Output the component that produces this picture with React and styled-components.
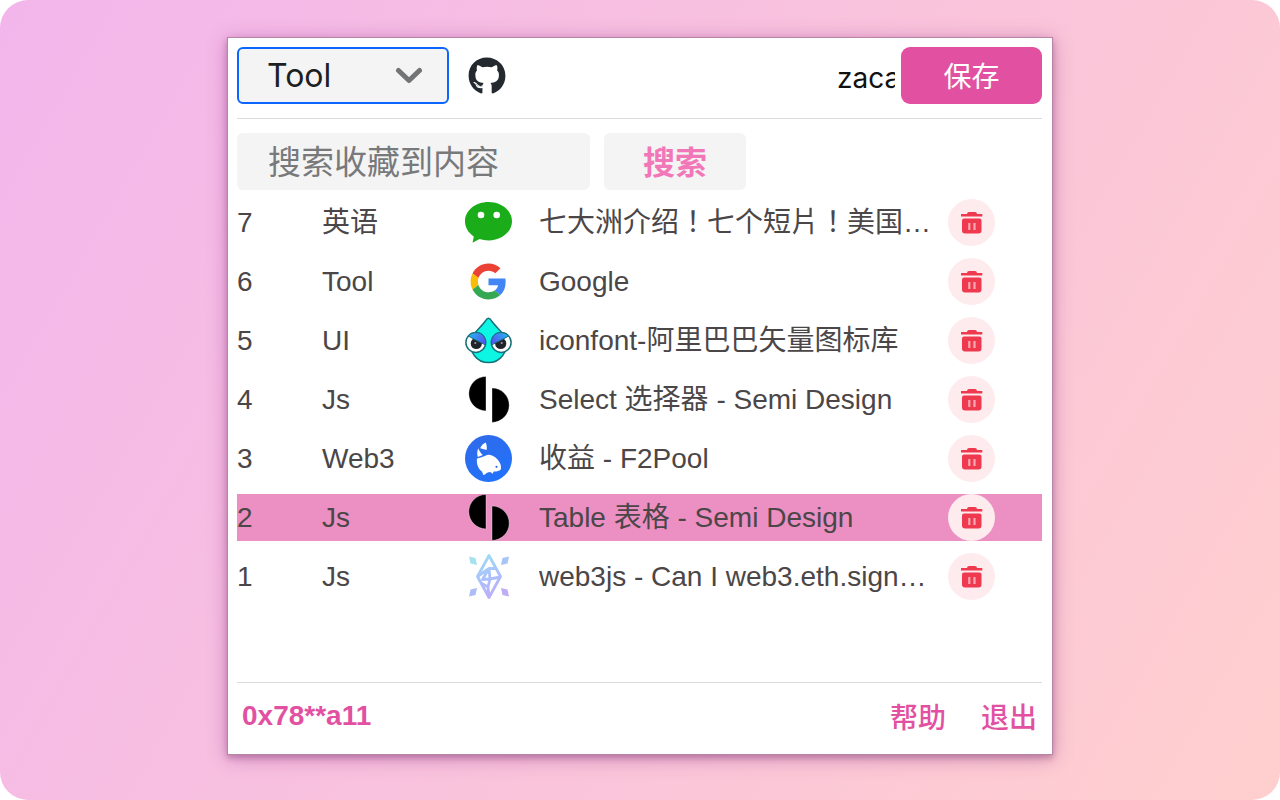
import React, { useState } from 'react';
import styled, { createGlobalStyle } from 'styled-components';
import { FaGithub } from 'react-icons/fa';

const uiFont = "Inter, 'Noto Sans CJK SC', sans-serif";
const bodyFont = "'Liberation Sans', 'Noto Sans CJK SC', sans-serif";
const titleFont = "'Liberation Sans', 'Noto Sans CJK TC', sans-serif";
const pink = '#e251a1';

const GlobalStyle = createGlobalStyle`
  *, *::before, *::after { box-sizing: border-box; }
  body { margin: 0; background: #fff; font-family: ${bodyFont}; }
  button, input, select { font: inherit; border: 0; outline: 0; padding: 0; margin: 0; }
`;

const Page = styled.div`
  display: flex;
  flex-direction: column;
  align-items: center;
  min-height: 100vh;
  padding: 37px 24px 45px;
  border-radius: 28px;
  background: linear-gradient(120deg, #f3b6ec 0%, #ffcfce 100%);
`;

const Panel = styled.main`
  display: flex;
  flex-direction: column;
  flex: 1;
  width: 100%;
  max-width: 826px;
  padding: 9px 10px 0 9px;
  border: 1px solid #b984a6;
  background: #fff;
  color: #4b4647;
  font-size: 28px;
  box-shadow: 0 3px 18px rgba(150, 50, 140, 0.42), 0 3px 6px rgba(80, 30, 70, 0.3);
`;

const Toolbar = styled.header`
  display: flex;
  align-items: center;
  padding-bottom: 14px;
  border-bottom: 1px solid #dcdcde;
`;

const SelectBox = styled.div`
  display: grid;
  align-items: center;
  width: 212px;
  height: 57px;
  margin-right: 19px;
  border: 2px solid #0a66ff;
  border-radius: 6px;
  background: #f4f4f4;
  > * { grid-area: 1 / 1; }
  > svg { justify-self: end; margin-right: 24px; pointer-events: none; }
`;

const Select = styled.select`
  appearance: none;
  width: 100%;
  height: 100%;
  padding-left: 28px;
  background: transparent;
  color: #1c1f23;
  font-family: ${uiFont};
  font-size: 32px;
`;

const RepoLink = styled.a`
  display: flex;
  color: #24292f;
  font-size: 38px;
`;

const NameInput = styled.input`
  width: 58px;
  height: 57px;
  margin: 0 6px 0 auto;
  padding-top: 4px;
  background: transparent;
  color: #111;
  font-family: ${uiFont};
`;

const Button = styled.button`
  width: ${p => (p.$primary ? 141 : 142)}px;
  height: 57px;
  padding-bottom: ${p => (p.$primary ? 2 : 4)}px;
  border-radius: ${p => (p.$primary ? 9 : 6)}px;
  background: ${p => (p.$primary ? pink : '#f4f4f4')};
  color: ${p => (p.$primary ? '#fff' : '#f277b8')};
  font-family: ${uiFont};
  font-size: ${p => (p.$primary ? 28 : 32)}px;
  font-weight: ${p => (p.$primary ? 400 : 700)};
  cursor: pointer;
`;

const SearchBar = styled.form`
  display: flex;
  gap: 14px;
  padding: 14px 0 9px;
`;

const SearchInput = styled.input`
  width: 353px;
  height: 57px;
  padding: 0 31px;
  border-radius: 6px;
  background: #f4f4f4;
  color: #1c1f23;
  font-family: ${uiFont};
  font-size: 33px;
  &::placeholder { color: #78797b; opacity: 1; }
`;

const List = styled.table`
  display: block;
  flex: 1;
  tbody { display: grid; gap: 12px; }
`;

const Row = styled.tr`
  display: grid;
  grid-template-columns: 85px 143px 74px minmax(0, 1fr) 94px;
  align-items: center;
  height: 47px;
  background: ${p => (p.$active ? '#ec8fc3' : 'transparent')};
`;

const Cell = styled.td`
  padding: 0;
  line-height: 40px;
`;

const TitleCell = styled(Cell)`
  padding-right: 14px;
  overflow: hidden;
  font-family: ${titleFont};
  text-overflow: ellipsis;
  white-space: nowrap;
`;

const IconCell = styled(Cell)`
  display: flex;
  svg { display: block; width: 47px; height: 47px; }
`;

const DeleteButton = styled.button`
  display: block;
  width: 47px;
  height: 47px;
  border-radius: 50%;
  background: #feebed;
  cursor: pointer;
  svg { display: block; }
`;

const Footer = styled.footer`
  display: flex;
  align-items: center;
  gap: 35px;
  height: 72px;
  padding: 0 5px 6px;
  border-top: 1px solid #dcdcde;
`;

const Account = styled.strong`
  flex: 1;
  color: ${pink};
`;

const FooterLink = styled.a`
  color: ${pink};
  font-weight: 500;
  text-decoration: none;
`;

const Chevron = () => (
  <svg width="28" height="20" viewBox="0 0 28 20" fill="none" stroke="#727476" strokeWidth="5" strokeLinecap="round" strokeLinejoin="round" aria-hidden="true">
    <path d="M3.500 4.500 14 14.500 24.500 4.500" />
  </svg>
);

const Trash = () => (
  <svg width="47" height="47" viewBox="0 0 47 47" fill="#ef394e" aria-hidden="true">
    <path d="M19 15a2.200 2.200 0 0 1 2-2h6a2.200 2.200 0 0 1 2 2h5.300v2.600H13V15z" />
    <path d="M14 21.500a2 2 0 0 1 2-2h15.500a2 2 0 0 1 2 2V31.500a3 3 0 0 1-3 3H17a3 3 0 0 1-3-3z" />
    <path d="M20.200 24h2.200v7h-2.200zM25.400 24h2.200v7h-2.200z" fill="#f9a9b2" />
  </svg>
);

const WechatIcon = () => (
  <svg viewBox="0 0 47 47" aria-hidden="true">
    <path fill="#1aad19" d="M23.500 3C10.500 3 0 11.400 0 22.200c0 6.300 3.300 11.400 8.800 15.200L7.600 43.800l6.900-3.800c2.800.9 5.800 1.400 9 1.400C36.500 41.400 47 33 47 22.200S36.500 3 23.500 3z" />
    <circle cx="16" cy="16" r="3.300" fill="#fff" />
    <circle cx="31.700" cy="16" r="3.300" fill="#fff" />
  </svg>
);

const GoogleIcon = () => (
  <svg viewBox="-7.500 -7.500 63 63" aria-hidden="true">
    <path fill="#ea4335" d="M24 9.500c3.540 0 6.710 1.220 9.210 3.600l6.850-6.850C35.900 2.380 30.470 0 24 0 14.620 0 6.510 5.380 2.560 13.220l7.980 6.190C12.430 13.720 17.740 9.500 24 9.500z" />
    <path fill="#4285f4" d="M46.980 24.550c0-1.570-.15-3.090-.38-4.550H24v9.020h12.940c-.58 2.960-2.260 5.480-4.780 7.180l7.730 6c4.510-4.180 7.090-10.360 7.090-17.650z" />
    <path fill="#fbbc05" d="M10.530 28.590c-.48-1.450-.76-2.990-.76-4.590s.27-3.140.76-4.590l-7.980-6.190C.92 16.460 0 20.120 0 24c0 3.880.92 7.540 2.560 10.780l7.970-6.190z" />
    <path fill="#34a853" d="M24 48c6.480 0 11.930-2.130 15.890-5.810l-7.730-6c-2.150 1.450-4.920 2.300-8.160 2.300-6.260 0-11.570-4.220-13.470-9.910l-7.980 6.190C6.510 42.620 14.620 48 24 48z" />
  </svg>
);

const IconfontIcon = () => (
  <svg viewBox="0 0 47 47" aria-hidden="true">
    <defs>
      <linearGradient id="lid" x1="0" y1="0" x2="1" y2="0.600">
        <stop offset="0" stopColor="#22c0f0" />
        <stop offset="1" stopColor="#5457f0" />
      </linearGradient>
    </defs>
    <path d="M23.500 1.200c-1.500 0-2.200 1.200-3.200 2.800C17 9 10 14.500 5.500 22c-2 13 6.500 23.600 18 23.600S43.500 35 41.500 22C37 14.500 30 9 26.700 4c-1-1.600-1.700-2.800-3.200-2.800z" fill="#0df5e3" stroke="#17707a" strokeWidth="1.500" />
    <g id="iconfont-eye">
      <circle cx="10.800" cy="25.500" r="9.900" fill="#fff" stroke="#17707a" strokeWidth="1.500" />
      <circle cx="11.300" cy="26.500" r="5.600" fill="#20242b" />
      <path d="M3.500 19C7 14.500 16 14.300 19 19.500c1.700 2.500 1.900 5.200 1.300 8.500C15 24.600 10 23.200 3.500 19z" fill="url(#lid)" stroke="#17707a" strokeWidth="1" />
      <circle cx="10.300" cy="26" r="1.100" fill="#9a9a9a" />
    </g>
    <use href="#iconfont-eye" transform="matrix(-1 0 0 1 47 0)" />
  </svg>
);

const SemiIcon = () => (
  <svg viewBox="0 0 47 47" aria-hidden="true">
    <path d="M21 .5a17.200 17.200 0 0 0 0 34.400zM27 12a17.200 17.200 0 0 1 0 34.400z" stroke="#fff" strokeOpacity=".35" strokeWidth="1" />
  </svg>
);

const FishIcon = () => (
  <svg viewBox="0 0 47 47" aria-hidden="true">
    <defs>
      <linearGradient id="pool" x1="0.200" y1="0" x2="0.700" y2="1">
        <stop offset="0" stopColor="#2f6bea" />
        <stop offset="1" stopColor="#2272fb" />
      </linearGradient>
    </defs>
    <circle cx="23.500" cy="23.500" r="23.500" fill="url(#pool)" />
    <path fill="#fff" d="M20.800 7.500c.9 2.600 1.400 5 .8 7.400l-6.400-1.600c.8-2.600 3-4.600 5.600-5.800z" />
    <path fill="#fff" d="M13.200 13.200c1.200 2.900 2.700 5 4.600 6.800l-5 1.900c-.9-2.800-.7-5.800.4-8.700z" />
    <path fill="#fff" d="M12 23.500c3-.6 6-1.700 9-3 .8-.8 1.900-1 3.400-.8 4.600.9 8.300 4 10.600 8.300 1 2 1.200 4.200.8 6.500-1.800 1.500-4.400 2.200-7.100 2l-1 2.200-2.500-1.700c-2.300.2-4 .8-5.200 2.600l-1.700.4-1.200-3.200C13.200 33.600 11.200 29.200 12 23.500z" />
    <circle cx="31.500" cy="31.800" r="1.100" fill="#2a6ef0" />
  </svg>
);

const Web3Icon = () => (
  <svg viewBox="0 0 47 47" aria-hidden="true">
    <defs>
      <linearGradient id="gem" x1="10" y1="0" x2="30" y2="47" gradientUnits="userSpaceOnUse">
        <stop offset="0" stopColor="#9be3f1" />
        <stop offset=".5" stopColor="#a9c3fb" />
        <stop offset="1" stopColor="#c0a9f8" />
      </linearGradient>
    </defs>
    <g stroke="url(#gem)" strokeWidth="2.800" fill="none" strokeLinejoin="round">
      <path d="M24 2.500 35.500 23.500 24 44.500 12.500 23.500z" />
      <path d="M12.500 23.500 24 15.500 31 15.500M24 15.500 25 26 35.500 24M24 15.500 17.500 26.500 25 26 23 34 16 30M23 34 24 44" />
    </g>
    <path d="M4 3.500l6.500 1.500 1.500 7-6.500-1.500z" fill="#a5e2f0" />
    <path d="M44 3.500 37.500 5 36 12l6.500-1.500z" fill="#a7c4f6" />
    <path d="M4 43.500 10.500 42l1.500-7-6.500 1.500z" fill="#aebdf5" />
    <path d="M44 43.500 37.500 42 36 35l6.500 1.500z" fill="#bfaef5" />
  </svg>
);

const bookmarks = [
  { id: 7, group: '英语', Icon: WechatIcon, title: '七大洲介绍！七个短片！美国国家地理' },
  { id: 6, group: 'Tool', Icon: GoogleIcon, title: 'Google' },
  { id: 5, group: 'UI', Icon: IconfontIcon, title: 'iconfont-阿里巴巴矢量图标库' },
  { id: 4, group: 'Js', Icon: SemiIcon, title: 'Select 选择器 - Semi Design' },
  { id: 3, group: 'Web3', Icon: FishIcon, title: '收益 - F2Pool' },
  { id: 2, group: 'Js', Icon: SemiIcon, title: 'Table 表格 - Semi Design' },
  { id: 1, group: 'Js', Icon: Web3Icon, title: 'web3js - Can I web3.eth.signTransaction' },
];

export default function App() {
  const [group, setGroup] = useState('Tool');
  const [name, setName] = useState('zaca');
  return (
    <>
      <GlobalStyle />
      <Page>
        <Panel>
          <Toolbar>
            <SelectBox>
              <Select aria-label="分类" value={group} onChange={e => setGroup(e.target.value)}>
                <option>Tool</option>
                <option>UI</option>
                <option>Js</option>
                <option>Web3</option>
                <option>英语</option>
              </Select>
              <Chevron />
            </SelectBox>
            <RepoLink href="#github" aria-label="GitHub"><FaGithub /></RepoLink>
            <NameInput aria-label="名称" value={name} onChange={e => setName(e.target.value)} />
            <Button type="button" $primary>保存</Button>
          </Toolbar>
          <SearchBar onSubmit={e => e.preventDefault()}>
            <SearchInput aria-label="搜索收藏到内容" placeholder="搜索收藏到内容" />
            <Button type="submit">搜索</Button>
          </SearchBar>
          <List>
            <tbody>
              {bookmarks.map(({ id, group: tag, Icon, title }) => (
                <Row key={id} $active={id === 2}>
                  <Cell>{id}</Cell>
                  <Cell>{tag}</Cell>
                  <IconCell><Icon /></IconCell>
                  <TitleCell>{title}</TitleCell>
                  <Cell>
                    <DeleteButton type="button" aria-label={`删除 ${title}`}><Trash /></DeleteButton>
                  </Cell>
                </Row>
              ))}
            </tbody>
          </List>
          <Footer>
            <Account>0x78**a11</Account>
            <FooterLink href="#help">帮助</FooterLink>
            <FooterLink href="#logout">退出</FooterLink>
          </Footer>
        </Panel>
      </Page>
    </>
  );
}
